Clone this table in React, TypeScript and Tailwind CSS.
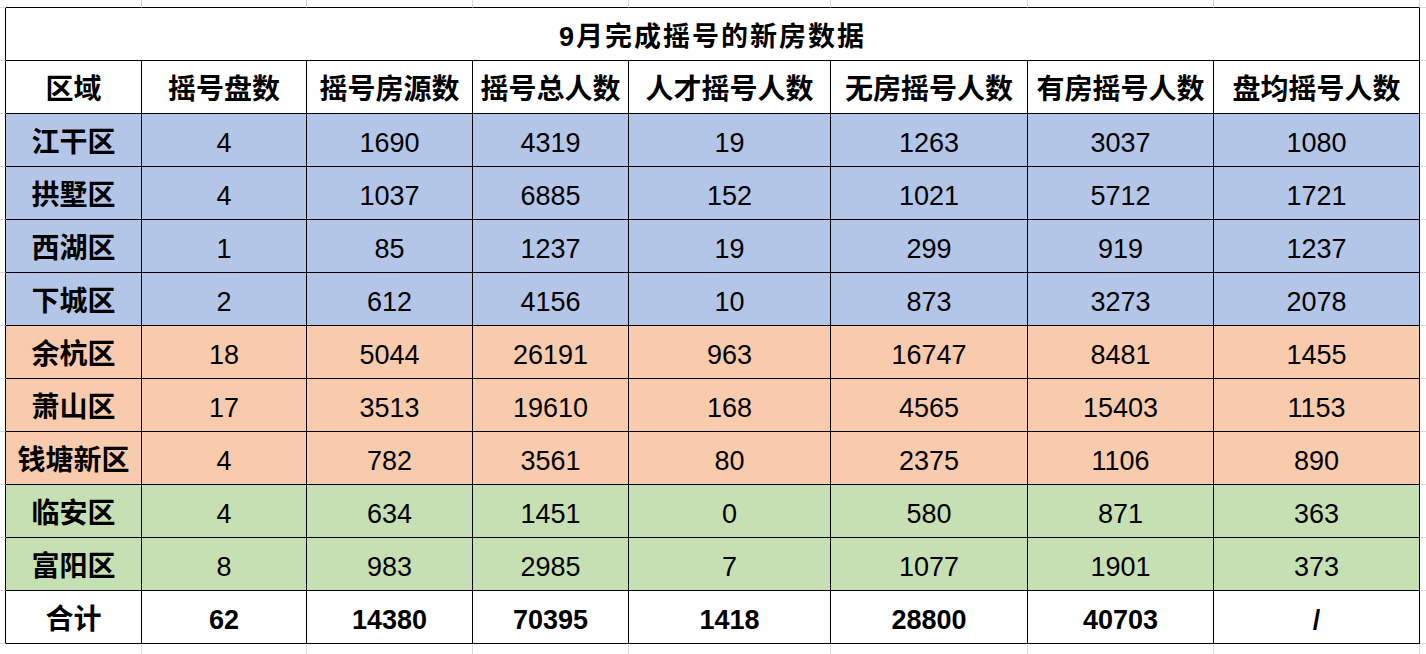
import React from 'react';

// column widths include the 1px right border
const colW = [
  'w-[136px]',
  'w-[165px]',
  'w-[166px]',
  'w-[156px]',
  'w-[202px]',
  'w-[197px]',
  'w-[186px]',
  'w-[206px]',
];

const headers = ['区域', '摇号盘数', '摇号房源数', '摇号总人数', '人才摇号人数', '无房摇号人数', '有房摇号人数', '盘均摇号人数'];

type Tone = 'blue' | 'orange' | 'green';

const rows: { name: string; values: string[]; tone: Tone }[] = [
  { name: '江干区', values: ['4', '1690', '4319', '19', '1263', '3037', '1080'], tone: 'blue' },
  { name: '拱墅区', values: ['4', '1037', '6885', '152', '1021', '5712', '1721'], tone: 'blue' },
  { name: '西湖区', values: ['1', '85', '1237', '19', '299', '919', '1237'], tone: 'blue' },
  { name: '下城区', values: ['2', '612', '4156', '10', '873', '3273', '2078'], tone: 'blue' },
  { name: '余杭区', values: ['18', '5044', '26191', '963', '16747', '8481', '1455'], tone: 'orange' },
  { name: '萧山区', values: ['17', '3513', '19610', '168', '4565', '15403', '1153'], tone: 'orange' },
  { name: '钱塘新区', values: ['4', '782', '3561', '80', '2375', '1106', '890'], tone: 'orange' },
  { name: '临安区', values: ['4', '634', '1451', '0', '580', '871', '363'], tone: 'green' },
  { name: '富阳区', values: ['8', '983', '2985', '7', '1077', '1901', '373'], tone: 'green' },
];

const totals = ['62', '14380', '70395', '1418', '28800', '40703', '/'];

const toneBg: Record<Tone, string> = {
  blue: 'bg-[#b4c6e7]',
  orange: 'bg-[#f8cbad]',
  green: 'bg-[#c6e0b4]',
};

const cell = 'h-full flex items-center justify-center pt-[6px] border-r border-b border-black leading-none';

// light spreadsheet gridlines above and below the table
const Strip = ({ h }: { h: string }) => (
  <div className={`flex ${h}`}>
    <div className="w-[6px] h-full" />
    {colW.map((w, i) => (
      <div key={i} className={`${w} h-full border-r border-[#d9d9d9]`} />
    ))}
    <div className="w-[6px] h-full" />
  </div>
);

const Row = ({ children }: { children: React.ReactNode }) => (
  <div className="flex h-[53px]">
    <div className="w-[6px] h-full border-r border-r-black border-b border-b-[#d9d9d9]" />
    {children}
    <div className="w-[6px] h-full border-b border-[#d9d9d9]" />
  </div>
);

export default function App() {
  return (
    <div className="w-[1426px] h-[654px] bg-white overflow-hidden text-black font-['Liberation_Sans','Noto_Sans_CJK_SC',sans-serif]">
      <div className="flex h-[8px]">
        <div className="w-[6px] h-full border-b border-[#d9d9d9]" />
        {colW.map((w, i) => (
          <div key={i} className={`${w} h-full border-r border-r-[#d9d9d9] border-b border-b-black`} />
        ))}
        <div className="w-[6px] h-full border-b border-[#d9d9d9]" />
      </div>

      <Row>
        <div className={`w-[1414px] ${cell} text-[27px] font-bold tracking-[2px]`}>9月完成摇号的新房数据</div>
      </Row>

      <Row>
        {headers.map((t, i) => (
          <div key={i} className={`${colW[i]} ${cell} text-[28px] font-bold`}>{t}</div>
        ))}
      </Row>

      {rows.map((r) => (
        <Row key={r.name}>
          <div className={`${colW[0]} ${cell} ${toneBg[r.tone]} text-[28px] font-bold`}>{r.name}</div>
          {r.values.map((v, i) => (
            <div key={i} className={`${colW[i + 1]} ${cell} ${toneBg[r.tone]} text-[27px]`}>{v}</div>
          ))}
        </Row>
      ))}

      <Row>
        <div className={`${colW[0]} ${cell} text-[28px] font-bold`}>合计</div>
        {totals.map((v, i) => (
          <div key={i} className={`${colW[i + 1]} ${cell} text-[27px] font-bold`}>{v}</div>
        ))}
      </Row>

      <Strip h="h-[10px]" />
    </div>
  );
}
